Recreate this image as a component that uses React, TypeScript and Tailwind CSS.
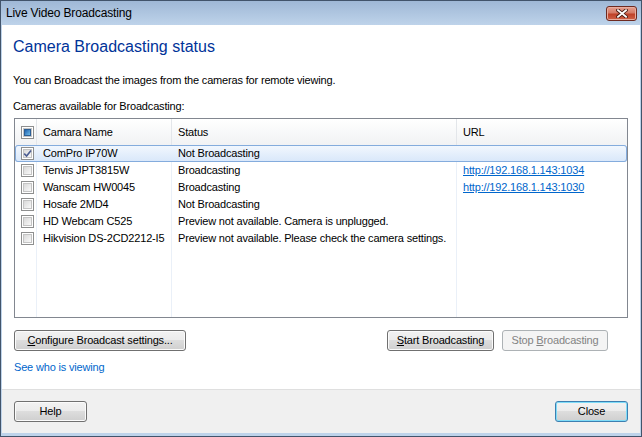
import React from "react";

type CheckState = "none" | "checked" | "mixed";

function CheckBox({ state = "none" }: { state?: CheckState }) {
  return (
    <span className="flex h-[13px] w-[13px] shrink-0 items-center justify-center border border-[#8e8f8f] bg-white">
      <span className="flex h-[9px] w-[9px] items-center justify-center border border-[#c4c4c4] bg-gradient-to-br from-[#d9d9d9] to-[#f9f9f9]">
        {state === "mixed" && (
          <span className="h-[7px] w-[7px] border border-[#2c5f95] bg-gradient-to-br from-[#1f62ad] to-[#6fbbe8]" />
        )}
        {state === "checked" && (
          <svg width="9" height="9" viewBox="0 0 9 9" className="overflow-visible">
            <path d="M1.2 4.6 L3.6 7 L8 1.4" fill="none" stroke="#4b5d92" strokeWidth="1.6" />
          </svg>
        )}
      </span>
    </span>
  );
}

function Btn({
  children,
  className = "",
  disabled,
  isDefault,
}: {
  children: React.ReactNode;
  className?: string;
  disabled?: boolean;
  isDefault?: boolean;
}) {
  const look = disabled
    ? "border-[#adb2b5] bg-[#f4f4f4] text-[#838383]"
    : isDefault
    ? "border-[#3c7fb1] bg-[linear-gradient(#f2f2f2_0%,#ebebeb_50%,#dddddd_50%,#cfcfcf_100%)] shadow-[inset_0_0_0_1px_#7fdcf8] text-black"
    : "border-[#707070] bg-[linear-gradient(#f2f2f2_0%,#ebebeb_50%,#dddddd_50%,#cfcfcf_100%)] shadow-[inset_0_0_0_1px_#fbfbfb] text-black";
  return (
    <button
      className={`flex h-[21px] items-center justify-center rounded-[3px] border text-[11px] leading-none ${look} ${className}`}
    >
      {children}
    </button>
  );
}

const cols = ["w-[22px]", "w-[135px]", "w-[285px]", "flex-1"];

type Cam = { name: string; status: string; url?: string; selected?: boolean; checked?: boolean };

const cams: Cam[] = [
  { name: "ComPro IP70W", status: "Not Broadcasting", selected: true, checked: true },
  { name: "Tenvis JPT3815W", status: "Broadcasting", url: "http://192.168.1.143:1034" },
  { name: "Wanscam HW0045", status: "Broadcasting", url: "http://192.168.1.143:1030" },
  { name: "Hosafe 2MD4", status: "Not Broadcasting" },
  { name: "HD Webcam C525", status: "Preview not available. Camera is unplugged." },
  { name: "Hikvision DS-2CD2212-I5", status: "Preview not available. Please check the camera settings." },
];

function Row({ cam }: { cam: Cam }) {
  const line = cam.selected ? "" : "border-r border-[#eaf0f8]";
  return (
    <div
      className={`flex h-[17px] items-center ${
        cam.selected
          ? "rounded-[3px] bg-gradient-to-b from-[#f3f8fe] to-[#d8e7fa] shadow-[inset_0_0_0_1px_#84acdd]"
          : ""
      }`}
    >
      <div className={`${cols[0]} flex h-full items-center pl-[6px] ${line}`}>
        <CheckBox state={cam.checked ? "checked" : "none"} />
      </div>
      <div className={`${cols[1]} flex h-full items-center whitespace-nowrap pl-[6px] ${line}`}>{cam.name}</div>
      <div className={`${cols[2]} flex h-full items-center whitespace-nowrap pl-[6px] ${line}`}>{cam.status}</div>
      <div className={`${cols[3]} flex h-full items-center whitespace-nowrap pl-[6px]`}>
        {cam.url && <span className="text-[#0066cc] underline">{cam.url}</span>}
      </div>
    </div>
  );
}

export default function App() {
  return (
    <div className="flex h-[437px] w-[642px] flex-col overflow-hidden border border-[#42546b] bg-white font-['Liberation_Sans',Arial,sans-serif] text-[11px] tracking-[-0.17px] text-black">
      {/* Title bar */}
      <div className="flex h-[24px] shrink-0 items-start justify-between bg-gradient-to-b from-[#9fb8d6] to-[#bed3ea] pl-[5px] pr-[4px]">
        <span className="mt-[5px] text-[12px] leading-[14px] tracking-[-0.15px] text-black">Live Video Broadcasting</span>
        <button className="mt-[5px] flex h-[15px] w-[31px] items-center justify-center rounded-[3px] border border-[#6e2a20] bg-[linear-gradient(#e6a090_0%,#d47a66_45%,#bf4128_55%,#cf6248_100%)] shadow-[inset_0_0_0_1px_#e8ad9f]">
          <svg width="12" height="9" viewBox="0 0 12 9">
            <path d="M2 1.2 L10 7.8 M10 1.2 L2 7.8" stroke="#4a1d15" strokeWidth="3.6" strokeLinecap="square" />
            <path d="M2 1.2 L10 7.8 M10 1.2 L2 7.8" stroke="#ffffff" strokeWidth="1.8" strokeLinecap="square" />
          </svg>
        </button>
      </div>

      {/* Client area */}
      <div className="flex flex-1 flex-col border-x border-b-[3px] border-[#bed3ea]">
        <div className="flex flex-1 flex-col px-[12px]">
          <h1 className="-ml-px mt-[12px] text-[16px] leading-[20px] tracking-normal text-[#003399]">Camera Broadcasting status</h1>
          <p className="-ml-px mt-[16px] leading-[14px]">You can Broadcast the images from the cameras for remote viewing.</p>
          <p className="-ml-px mt-[12px] leading-[14px]">Cameras available for Broadcasting:</p>

          {/* Camera list */}
          <div className="mt-[5px] flex h-[200px] flex-col border border-[#828790] bg-white">
            <div className="flex h-[26px] shrink-0 items-stretch bg-gradient-to-b from-white to-[#f1f2f4]">
              <div className={`${cols[0]} flex items-center border-r border-[#e3e6ea] pl-[6px]`}>
                <CheckBox state="mixed" />
              </div>
              <div className={`${cols[1]} flex items-center border-r border-[#e3e6ea] pl-[6px]`}>Camara Name</div>
              <div className={`${cols[2]} flex items-center border-r border-[#e3e6ea] pl-[6px]`}>Status</div>
              <div className={`${cols[3]} flex items-center pl-[6px]`}>URL</div>
            </div>
            {cams.map((c) => (
              <Row key={c.name} cam={c} />
            ))}
            <div className="flex flex-1">
              <div className={`${cols[0]} border-r border-[#eaf0f8]`} />
              <div className={`${cols[1]} border-r border-[#eaf0f8]`} />
              <div className={`${cols[2]} border-r border-[#eaf0f8]`} />
              <div className={cols[3]} />
            </div>
          </div>

          <div className="mt-[12px] flex items-center">
            <Btn className="w-[172px]">
              <span>
                <span className="underline">C</span>onfigure Broadcast settings...
              </span>
            </Btn>
            <Btn className="ml-auto w-[107px]">
              <span>
                <span className="underline">S</span>tart Broadcasting
              </span>
            </Btn>
            <Btn disabled className="ml-[8px] mr-[20px] w-[106px]">
              <span>
                Stop <span className="underline">B</span>roadcasting
              </span>
            </Btn>
          </div>

          <a className="mt-[9px] w-fit leading-[14px] text-[#0066cc]">See who is viewing</a>
        </div>

        {/* Footer */}
        <div className="flex h-[44px] shrink-0 items-start justify-between border-t border-[#dfdfdf] bg-[#f0f0f0] px-[12px] pt-[11px]">
          <Btn className="w-[73px]">Help</Btn>
          <Btn isDefault className="w-[73px]">Close</Btn>
        </div>
      </div>
    </div>
  );
}
